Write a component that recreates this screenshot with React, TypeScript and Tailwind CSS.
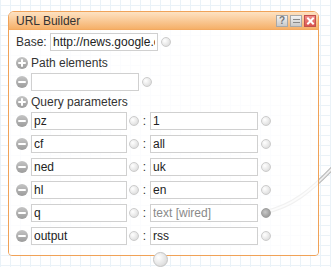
import React from 'react';

const Term = ({ wired = false }: { wired?: boolean }) => (
  <span
    className={`block w-[10px] h-[10px] rounded-full border shrink-0 ${
      wired
        ? 'border-[#a0a0a0] bg-[radial-gradient(circle_at_40%_40%,#c8c8c8,#9c9c9c_70%,#8c8c8c)]'
        : 'border-[#cccccc] bg-[radial-gradient(circle_at_35%_35%,#ffffff,#e8e8e8_55%,#d2d2d2)]'
    }`}
  />
);

const RoundBtn = ({ plus = false }: { plus?: boolean }) => (
  <span className="relative block w-[12px] h-[12px] rounded-full bg-gradient-to-b from-[#c4c4c4] to-[#9c9c9c] shrink-0">
    <span className="absolute left-[2px] top-[5px] w-[8px] h-[2px] bg-white rounded-[1px]" />
    {plus && <span className="absolute left-[5px] top-[2px] w-[2px] h-[8px] bg-white rounded-[1px]" />}
  </span>
);

const Field = ({ value, w, placeholder }: { value?: string; w: string; placeholder?: string }) => (
  <input
    readOnly
    value={value ?? ''}
    placeholder={placeholder}
    className={`${w} h-[18px] border border-[#d0d0d0] bg-white px-[2px] text-[12px] text-[#222] placeholder:text-[#8a8a8a] outline-none shrink-0`}
  />
);

const params = [
  { k: 'pz', v: '1' },
  { k: 'cf', v: 'all' },
  { k: 'ned', v: 'uk' },
  { k: 'hl', v: 'en' },
  { k: 'q', v: '', wired: true },
  { k: 'output', v: 'rss' },
];

export default function App() {
  return (
    <div className="relative w-[331px] h-[267px] overflow-hidden bg-white [background-image:linear-gradient(#eaf2f8_1px,transparent_1px),linear-gradient(90deg,#eaf2f8_1px,transparent_1px)] [background-size:10px_10px] [background-position:0_5px] font-['Liberation_Sans',Arial,sans-serif] text-[#333]">
      {/* wire from q terminal */}
      <svg className="absolute left-0 top-0 pointer-events-none" width="331" height="267">
        <path d="M265 212 C 290 207, 310 193, 340 160" fill="none" stroke="#b8b8b8" strokeWidth="4" />
        <path d="M265 212 C 290 207, 310 193, 340 160" fill="none" stroke="#eeeeee" strokeWidth="2" />
      </svg>

      <div className="relative ml-[8px] mt-[11px] w-[311px] border border-[#f0a258] rounded-t-[6px] rounded-b-[4px]">
        {/* title bar */}
        <div className="h-[18px] flex items-center pl-[7px] pr-[2px] rounded-t-[5px] bg-gradient-to-b from-[#fde2c2] to-[#f5b068] border-b border-[#f3a960]">
          <span className="text-[12px] leading-none text-[#333]">URL Builder</span>
          <div className="ml-auto flex gap-[2px]">
            <span className="w-[12px] h-[12px] border border-[#a8a8a8] bg-gradient-to-b from-[#f4f4f4] to-[#c9c9c9] flex items-center justify-center text-[10px] font-bold leading-none text-[#777]">?</span>
            <span className="w-[12px] h-[12px] border border-[#a8a8a8] bg-gradient-to-b from-[#f4f4f4] to-[#c9c9c9] flex flex-col items-center justify-center gap-[2px]">
              <span className="w-[7px] h-[1px] bg-[#888]" />
              <span className="w-[7px] h-[1px] bg-[#888]" />
            </span>
            <span className="relative w-[12px] h-[12px] border border-[#c0504d] bg-gradient-to-b from-[#f08b86] to-[#d9534f] flex items-center justify-center">
              <span className="absolute w-[9px] h-[2px] bg-white rotate-45" />
              <span className="absolute w-[9px] h-[2px] bg-white -rotate-45" />
            </span>
          </div>
        </div>

        {/* body */}
        <div className="bg-white/80 pl-[7px] pt-[3px] pb-[10px] text-[12px] rounded-b-[3px]">
          <div className="flex items-center h-[18px]">
            <span className="w-[34px]">Base:</span>
            <Field value="http://news.google.com/news" w="w-[108px]" />
            <span className="ml-[3px]"><Term /></span>
          </div>

          <div className="flex items-center gap-[3px] h-[12px] mt-[6px]">
            <RoundBtn plus />
            <span>Path elements</span>
          </div>

          <div className="flex items-center h-[18px] mt-[4px]">
            <RoundBtn />
            <span className="ml-[3px]"><Field w="w-[108px]" /></span>
            <span className="ml-[3px]"><Term /></span>
          </div>

          <div className="flex items-center gap-[3px] h-[12px] mt-[5px]">
            <RoundBtn plus />
            <span>Query parameters</span>
          </div>

          <div className="flex flex-col gap-[5px] mt-[4px]">
            {params.map((p) => (
              <div key={p.k} className="flex items-center h-[18px]">
                <RoundBtn />
                <span className="ml-[3px]"><Field value={p.k} w="w-[96px]" /></span>
                <span className="ml-[2px]"><Term /></span>
                <span className="w-[11px] text-center">:</span>
                <Field value={p.v} placeholder={p.wired ? 'text [wired]' : undefined} w="w-[108px]" />
                <span className="ml-[3px]"><Term wired={p.wired} /></span>
              </div>
            ))}
          </div>
        </div>

        {/* bottom terminal */}
        <span className="absolute left-[144px] bottom-[-12px] w-[15px] h-[15px] rounded-full border border-[#c4c4c4] bg-[radial-gradient(circle_at_35%_35%,#ffffff,#e6e6e6_55%,#cfcfcf)]" />
      </div>
    </div>
  );
}
